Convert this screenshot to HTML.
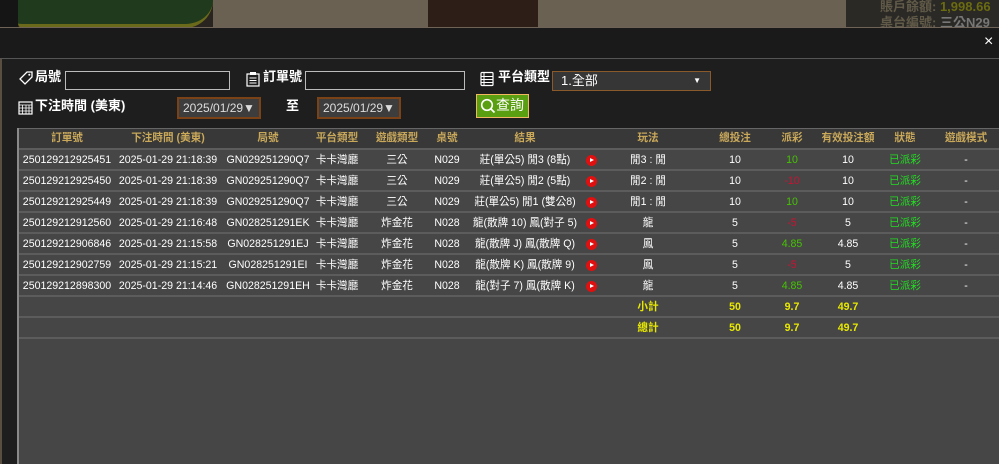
<!DOCTYPE html>
<html><head><meta charset="utf-8"><style>
*{margin:0;padding:0;box-sizing:border-box}
body{width:999px;height:464px;overflow:hidden;background:#1e1e1e;position:relative;font-family:"Liberation Sans","Noto Sans CJK TC",sans-serif;font-size:10.6px;color:#fff;line-height:14px}
.a{position:absolute}
.c{position:absolute;width:120px;margin-left:-60px;text-align:center;white-space:nowrap;line-height:14px;height:14px}
.lbl{font-size:13px;font-weight:bold;color:#fff;line-height:16px}
.inp{border:1px solid #bbb;background:#1a1a1a;height:19px}
.date{border:2px solid #7a4216;background:#3d3d3d;color:#ddd;font-size:12px;height:22px;line-height:18px;padding-left:4px;width:84px}
.hd{color:#c9a85a;font-weight:bold}
.play{position:absolute;width:11px;height:11px;border-radius:50%;background:#e01010;margin-left:-5px}
.play:after{content:"";position:absolute;left:4px;top:3px;border-left:4px solid #fff;border-top:2.5px solid transparent;border-bottom:2.5px solid transparent}
.g{color:#44c400}.r{color:#cc1133}.st{color:#22dd22}.y{color:#e8e800;font-weight:bold}
</style></head><body>
<div class="a" style="left:0;top:0;width:999px;height:28px;background:#2a2420"></div>
<div class="a" style="left:0;top:0;width:18px;height:28px;background:#151515"></div>
<div class="a" style="left:18px;top:0;width:195px;height:28px;background:#1f3a1c;border-bottom:4px solid #6b6a1a;border-radius:0 0 60px 10px"></div>
<div class="a" style="left:213px;top:0;width:215px;height:28px;background:#6a6152"></div>
<div class="a" style="left:428px;top:0;width:110px;height:28px;background:#2d1f17"></div>
<div class="a" style="left:538px;top:0;width:310px;height:28px;background:#6a6152"></div>
<div class="a" style="left:846px;top:0;width:153px;height:28px;background:#2a2926"></div>
<div class="a" style="left:880px;top:0;font-size:13px;font-weight:bold;color:#615a48;white-space:nowrap">賬戶餘額: <span style="color:#6b6b10">1,998.66</span></div>
<div class="a" style="left:880px;top:16px;font-size:13px;font-weight:bold;color:#615a48;white-space:nowrap">桌台編號: <span style="color:#777">三公N29</span></div>
<div class="a" style="left:0;top:27px;width:999px;height:1px;background:#6e6356"></div>
<div class="a" style="left:0;top:28px;width:999px;height:30px;background:#1a1a1a"></div>
<div class="a" style="left:0;top:58px;width:999px;height:1px;background:#555"></div>
<div class="a" style="left:984px;top:35px;font-size:16px;color:#fff">×</div>
<div class="a" style="left:0;top:59px;width:2px;height:405px;background:#5a4e40"></div>
<svg class="a" style="left:18px;top:70px" width="16" height="16" viewBox="0 0 16 16"><path d="M9 2h5v5l-7 7-5-5z" fill="none" stroke="#fff" stroke-width="1.3"/><circle cx="11.3" cy="4.7" r="1" fill="#fff"/></svg>
<div class="a lbl" style="left:35px;top:69px">局號</div>
<div class="a inp" style="left:65px;top:71px;width:165px"></div>
<svg class="a" style="left:246px;top:71px" width="14" height="16" viewBox="0 0 14 16"><rect x="1" y="3" width="12" height="12" fill="none" stroke="#fff" stroke-width="1.2"/><rect x="4" y="1" width="6" height="3" fill="#fff"/><path d="M3.5 7h7M3.5 9.5h7M3.5 12h7" stroke="#fff"/></svg>
<div class="a lbl" style="left:263px;top:69px">訂單號</div>
<div class="a inp" style="left:305px;top:71px;width:160px"></div>
<svg class="a" style="left:480px;top:71px" width="14" height="16" viewBox="0 0 14 16"><rect x="1" y="1.5" width="12" height="13" rx="1" fill="none" stroke="#fff" stroke-width="1.2"/><path d="M1 5.5h12M1 8.5h12M1 11.5h12M4 1.5v13" stroke="#fff"/></svg>
<div class="a lbl" style="left:498px;top:69px">平台類型</div>
<div class="a" style="left:552px;top:71px;width:159px;height:20px;border:1px solid #8a5a2a;background:#363636;color:#fff;font-size:13px;padding-left:8px;line-height:17px">1.全部<span style="position:absolute;right:9px;top:0;font-size:8px">▼</span></div>
<svg class="a" style="left:18px;top:100px" width="15" height="15" viewBox="0 0 15 15"><rect x="1" y="2" width="13" height="12" fill="none" stroke="#fff" stroke-width="1.2"/><path d="M1 5h13M4.5 5v9M8 5v9M11 5v9M1 8h13M1 11h13" stroke="#fff" stroke-width=".8"/></svg>
<div class="a lbl" style="left:35px;top:98px">下注時間 (美東)</div>
<div class="a date" style="left:177px;top:97px">2025/01/29▼</div>
<div class="a lbl" style="left:286px;top:98px">至</div>
<div class="a date" style="left:317px;top:97px">2025/01/29▼</div>
<div class="a" style="left:476px;top:94px;width:53px;height:24px;background:#5a9e12;border:1px solid #f0b860"></div>
<svg class="a" style="left:480px;top:98px" width="16" height="16" viewBox="0 0 16 16"><circle cx="7" cy="7" r="5.3" fill="none" stroke="#fff" stroke-width="1.6"/><path d="M10.5 10.5l4 4" stroke="#fff" stroke-width="1.8"/></svg>
<div class="a" style="left:496px;top:97px;font-size:14px;color:#fff;line-height:17px">查詢</div>
<div class="a" style="left:17px;top:128px;width:2px;height:336px;background:#8a8a8a"></div>
<div class="a" style="left:19px;top:128px;width:980px;height:1px;background:#666"></div>
<div class="a" style="left:19px;top:129px;width:980px;height:20px;background:#383838"></div>
<div class="a" style="left:19px;top:149px;width:980px;height:315px;background:#464646"></div>
<div id="t"></div>
<script>
var cx=[67,168,268,337,397,447,525,591,648,735,792,848,905,966];
var hdr=["訂單號","下注時間 (美東)","局號","平台類型","遊戲類型","桌號","結果","","玩法","總投注","派彩","有效投注額","狀態","遊戲模式"];
var rows=[
["250129212925451","2025-01-29 21:18:39","GN029251290Q7","卡卡灣廳","三公","N029","莊(單公5) 閒3 (8點)","p","閒3 : 閒","10","<span class=g>10</span>","10"],
["250129212925450","2025-01-29 21:18:39","GN029251290Q7","卡卡灣廳","三公","N029","莊(單公5) 閒2 (5點)","p","閒2 : 閒","10","<span class=r>-10</span>","10"],
["250129212925449","2025-01-29 21:18:39","GN029251290Q7","卡卡灣廳","三公","N029","莊(單公5) 閒1 (雙公8)","p","閒1 : 閒","10","<span class=g>10</span>","10"],
["250129212912560","2025-01-29 21:16:48","GN028251291EK","卡卡灣廳","炸金花","N028","龍(散牌 10) 鳳(對子 5)","p","龍","5","<span class=r>-5</span>","5"],
["250129212906846","2025-01-29 21:15:58","GN028251291EJ","卡卡灣廳","炸金花","N028","龍(散牌 J) 鳳(散牌 Q)","p","鳳","5","<span class=g>4.85</span>","4.85"],
["250129212902759","2025-01-29 21:15:21","GN028251291EI","卡卡灣廳","炸金花","N028","龍(散牌 K) 鳳(散牌 9)","p","鳳","5","<span class=r>-5</span>","5"],
["250129212898300","2025-01-29 21:14:46","GN028251291EH","卡卡灣廳","炸金花","N028","龍(對子 7) 鳳(散牌 K)","p","龍","5","<span class=g>4.85</span>","4.85"]];
var h="";
hdr.forEach(function(t,i){if(t)h+='<div class="c hd" style="left:'+cx[i]+'px;top:131px">'+t+'</div>';});
function sep(y){h+='<div class="a" style="left:19px;top:'+y+'px;width:980px;height:2px;background:#5c5c5c"></div>';}
sep(148);
rows.forEach(function(r,k){var y=150+k*21;
 r.forEach(function(t,i){ if(t=="p")h+='<div class="play" style="left:'+cx[i]+'px;top:'+(y+5)+'px"></div>';
  else h+='<div class="c" style="left:'+cx[i]+'px;top:'+(y+3)+'px">'+t+'</div>';});
 h+='<div class="c st" style="left:905px;top:'+(y+3)+'px">已派彩</div><div class="c" style="left:966px;top:'+(y+3)+'px">-</div>';
 sep(y+19);});
[["小計",297],["總計",318]].forEach(function(s){var y=s[1];
 h+='<div class="c y" style="left:648px;top:'+(y+3)+'px">'+s[0]+'</div><div class="c y" style="left:735px;top:'+(y+3)+'px">50</div><div class="c y" style="left:792px;top:'+(y+3)+'px">9.7</div><div class="c y" style="left:848px;top:'+(y+3)+'px">49.7</div>';
 sep(y+19);});
document.getElementById("t").innerHTML=h;
</script>
</body></html>
